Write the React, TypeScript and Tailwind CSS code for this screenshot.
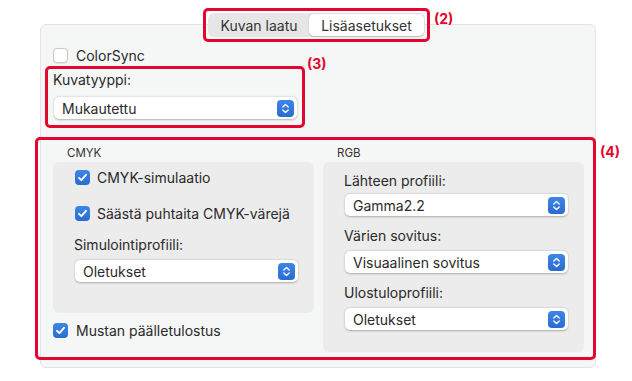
import React from "react";

const RED = "border-[#e3062f]";

function Check({ checked }: { checked?: boolean }) {
  if (!checked) {
    return (
      <span className="w-[15px] h-[15px] rounded-[4px] bg-white border border-[#c9c9c9] shadow-[0_0.5px_1px_rgba(0,0,0,0.08)] shrink-0" />
    );
  }
  return (
    <span className="w-[15px] h-[15px] rounded-[4px] bg-gradient-to-b from-[#3d86e6] to-[#2a6cd0] flex items-center justify-center shrink-0">
      <svg width="11" height="11" viewBox="0 0 11 11">
        <path d="M2 5.8 L4.4 8.2 L9 2.8" fill="none" stroke="white" strokeWidth="1.9" strokeLinecap="round" strokeLinejoin="round" />
      </svg>
    </span>
  );
}

function Popup({ value, className = "" }: { value: string; className?: string }) {
  return (
    <div className={`h-[22px] bg-white rounded-[5px] shadow-[0_0.5px_2px_rgba(0,0,0,0.28)] flex items-center justify-between pl-[8px] pr-[3px] ${className}`}>
      <span className="text-[14px] text-[#2a2a2a]">{value}</span>
      {/* stepper arrows */}
      <span className="w-[17px] h-[17px] rounded-[4px] bg-gradient-to-b from-[#3d86e6] to-[#2a6cd0] flex items-center justify-center">
        <svg width="17" height="17" viewBox="0 0 17 17">
          <path d="M5.8 7 L8.5 4.4 L11.2 7" fill="none" stroke="white" strokeWidth="1.4" strokeLinecap="round" strokeLinejoin="round" />
          <path d="M5.8 10 L8.5 12.6 L11.2 10" fill="none" stroke="white" strokeWidth="1.4" strokeLinecap="round" strokeLinejoin="round" />
        </svg>
      </span>
    </div>
  );
}

function Tag({ n, className = "" }: { n: number; className?: string }) {
  return (
    <div className={`shrink-0 leading-none text-[14px] font-bold text-[#e3062f] ${className}`}>({n})</div>
  );
}

export default function App() {
  return (
    <div className="w-[632px] h-[381px] bg-white text-[#2a2a2a] font-['Inter','Liberation_Sans',sans-serif] pt-[8px] overflow-hidden">
      {/* TABS */}
      <div className="relative z-10 ml-[203px] flex">
        <div className={`shrink-0 w-[227px] h-[34px] border-[3px] ${RED} rounded-[5px] p-[2px]`}>
          <div className="h-[24px] bg-[#e6e6e6] rounded-[6px] flex p-[1px]">
            <div className="flex-1 flex items-center justify-center text-[14px] text-[#333]">Kuvan laatu</div>
            <div className="w-[115px] bg-white rounded-[5px] shadow-[0_0.5px_1.5px_rgba(0,0,0,0.2)] flex items-center justify-center text-[14px] text-[#333]">
              Lisäasetukset
            </div>
          </div>
        </div>
        <Tag n={2} className="ml-[4px] mt-[4px]" />
      </div>

      {/* PANEL */}
      <div className="mt-[-18px] ml-[40px] w-[556px] h-[344px] bg-[#f5f6f6] border border-[#e4e4e4] rounded-[6px] pt-[22px]">
        {/* COLORSYNC */}
        <div className="ml-[12px] flex items-center gap-[8px] h-[16px]">
          <Check />
          <span className="text-[14px]">ColorSync</span>
        </div>

        {/* KUVATYYPPI */}
        <div className="flex mt-[3px]">
          <div className={`shrink-0 ml-[4px] w-[260px] h-[62px] border-[3px] ${RED} rounded-[5px] pl-[5px] pr-[5px] pt-[2px]`}>
            <div className="text-[14px] leading-[17px]">Kuvatyyppi:</div>
            <Popup value="Mukautettu" className="mt-[9px] ml-[1px]" />
          </div>
          <Tag n={3} className="ml-[2px] mt-[-9px]" />
        </div>

        {/* ADVANCED */}
        <div className="flex mt-[9px]">
          <div className={`shrink-0 ml-[-6px] w-[561px] h-[223px] border-[3px] ${RED} rounded-[5px] pl-[15px] pt-[7px] flex gap-[9px]`}>
            {/* CMYK */}
            <div className="w-[261px]">
              <div className="ml-[14px] text-[11.5px] leading-[13px] text-[#333]">CMYK</div>
              <div className="mt-[2px] h-[151px] bg-[#ececec] rounded-[6px] pl-[22px] pr-[16px] pt-[7px]">
                <div className="flex items-center gap-[7px] h-[16px]">
                  <Check checked />
                  <span className="text-[14px]">CMYK-simulaatio</span>
                </div>
                <div className="flex items-center gap-[7px] h-[16px] mt-[20px]">
                  <Check checked />
                  <span className="text-[14px]">Säästä puhtaita CMYK-värejä</span>
                </div>
                <div className="text-[14px] leading-[17px] mt-[15px] ml-[-1px]">Simulointiprofiili:</div>
                <Popup value="Oletukset" className="mt-[7px]" />
              </div>
              <div className="flex items-center gap-[8px] h-[16px] mt-[9px]">
                <Check checked />
                <span className="text-[14px]">Mustan päälletulostus</span>
              </div>
            </div>

            {/* RGB */}
            <div className="w-[261px]">
              <div className="ml-[14px] text-[11.5px] leading-[13px] text-[#333]">RGB</div>
              <div className="mt-[2px] h-[190px] bg-[#ececec] rounded-[6px] pl-[21px] pr-[16px] pt-[10px]">
                <div className="text-[14px] leading-[17px]">Lähteen profiili:</div>
                <Popup value="Gamma2.2" className="mt-[5px] ml-[1px]" />
                <div className="text-[14px] leading-[17px] mt-[11px]">Värien sovitus:</div>
                <Popup value="Visuaalinen sovitus" className="mt-[7px] ml-[1px]" />
                <div className="text-[14px] leading-[17px] mt-[11px]">Ulostuloprofiili:</div>
                <Popup value="Oletukset" className="mt-[7px] ml-[1px]" />
              </div>
            </div>
          </div>
          <Tag n={4} className="ml-[4px] mt-[8px]" />
        </div>
      </div>
    </div>
  );
}
